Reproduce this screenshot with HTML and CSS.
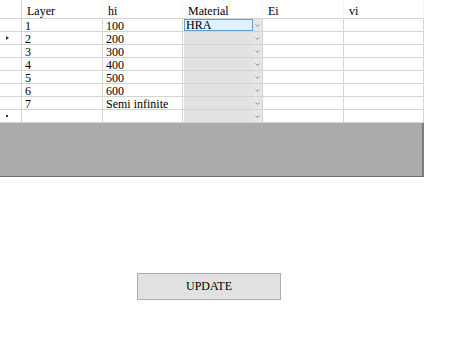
FILE: index.html
```html
<!DOCTYPE html>
<html>
<head>
<meta charset="utf-8">
<link rel="stylesheet" href="styles.css">
</head>
<body>
<div class="grid">
  <div class="row head">
    <div class="c rh"></div>
    <div class="c">Layer</div>
    <div class="c">hi</div>
    <div class="c">Material</div>
    <div class="c">Ei</div>
    <div class="c">vi</div>
  </div>
  <div class="row">
    <div class="c rh"></div>
    <div class="c">1</div>
    <div class="c">100</div>
    <div class="c cb"><div class="sel">HRA</div><div class="arr"><svg width="5" height="3" viewBox="0 0 5 3"><path d="M0.5 0.5 L2.5 2.5 L4.5 0.5" fill="none" stroke="#8a8a8a" stroke-width="1"/></svg></div></div>
    <div class="c"></div>
    <div class="c"></div>
  </div>
  <div class="row">
    <div class="c rh"><span class="tri"></span></div>
    <div class="c">2</div>
    <div class="c">200</div>
    <div class="c cb"><div class="box"></div><div class="arr"><svg width="5" height="3" viewBox="0 0 5 3"><path d="M0.5 0.5 L2.5 2.5 L4.5 0.5" fill="none" stroke="#8a8a8a" stroke-width="1"/></svg></div></div>
    <div class="c"></div>
    <div class="c"></div>
  </div>
  <div class="row">
    <div class="c rh"></div>
    <div class="c">3</div>
    <div class="c">300</div>
    <div class="c cb"><div class="box"></div><div class="arr"><svg width="5" height="3" viewBox="0 0 5 3"><path d="M0.5 0.5 L2.5 2.5 L4.5 0.5" fill="none" stroke="#8a8a8a" stroke-width="1"/></svg></div></div>
    <div class="c"></div>
    <div class="c"></div>
  </div>
  <div class="row">
    <div class="c rh"></div>
    <div class="c">4</div>
    <div class="c">400</div>
    <div class="c cb"><div class="box"></div><div class="arr"><svg width="5" height="3" viewBox="0 0 5 3"><path d="M0.5 0.5 L2.5 2.5 L4.5 0.5" fill="none" stroke="#8a8a8a" stroke-width="1"/></svg></div></div>
    <div class="c"></div>
    <div class="c"></div>
  </div>
  <div class="row">
    <div class="c rh"></div>
    <div class="c">5</div>
    <div class="c">500</div>
    <div class="c cb"><div class="box"></div><div class="arr"><svg width="5" height="3" viewBox="0 0 5 3"><path d="M0.5 0.5 L2.5 2.5 L4.5 0.5" fill="none" stroke="#8a8a8a" stroke-width="1"/></svg></div></div>
    <div class="c"></div>
    <div class="c"></div>
  </div>
  <div class="row">
    <div class="c rh"></div>
    <div class="c">6</div>
    <div class="c">600</div>
    <div class="c cb"><div class="box"></div><div class="arr"><svg width="5" height="3" viewBox="0 0 5 3"><path d="M0.5 0.5 L2.5 2.5 L4.5 0.5" fill="none" stroke="#8a8a8a" stroke-width="1"/></svg></div></div>
    <div class="c"></div>
    <div class="c"></div>
  </div>
  <div class="row">
    <div class="c rh"></div>
    <div class="c">7</div>
    <div class="c">Semi infinite</div>
    <div class="c cb"><div class="box"></div><div class="arr"><svg width="5" height="3" viewBox="0 0 5 3"><path d="M0.5 0.5 L2.5 2.5 L4.5 0.5" fill="none" stroke="#8a8a8a" stroke-width="1"/></svg></div></div>
    <div class="c"></div>
    <div class="c"></div>
  </div>
  <div class="row">
    <div class="c rh"><span class="star"></span></div>
    <div class="c"></div>
    <div class="c"></div>
    <div class="c cb"><div class="box"></div><div class="arr"><svg width="5" height="3" viewBox="0 0 5 3"><path d="M0.5 0.5 L2.5 2.5 L4.5 0.5" fill="none" stroke="#8a8a8a" stroke-width="1"/></svg></div></div>
    <div class="c"></div>
    <div class="c"></div>
  </div>
</div>
<div class="actions">
  <button class="btn">UPDATE</button>
</div>
</body>
</html>
```
FILE: styles.css
```css
html, body {
  margin: 0;
  padding: 0;
  background: #ffffff;
}
body {
  font-family: "Liberation Serif", "Times New Roman", serif;
  font-size: 12px;
  color: #000;
}
.grid {
  width: 424px;
  height: 177px;
  background: #ababab;
  border-right: 2px solid #7b7b7b;
  border-bottom: 1px solid #6e6e6e;
  box-sizing: border-box;
}
.row {
  display: grid;
  grid-template-columns: 22px 81px 80px 80px 81px 80px;
  height: 13px;
}
.row.head {
  height: 19px;
}
.c {
  background: #fff;
  border-right: 1px solid #d4d4d4;
  border-bottom: 1px solid #d4d4d4;
  box-sizing: border-box;
  padding-left: 3px;
  padding-top: 1px;
  line-height: 12px;
  white-space: nowrap;
  overflow: hidden;
  position: relative;
}
.row.head .c {
  border-right-color: #f4f4f4;
  padding-left: 5px;
  padding-top: 2px;
  line-height: 18px;
}
.row.head .c.rh {
  border-right-color: #d4d4d4;
}
.rh {
  padding-left: 0;
}
.tri {
  position: absolute;
  left: 6px;
  top: 4px;
  width: 0;
  height: 0;
  border-top: 2px solid transparent;
  border-bottom: 2px solid transparent;
  border-left: 3px solid #333;
}
.star {
  position: absolute;
  left: 6px;
  top: 5px;
  width: 2px;
  height: 2px;
  background: #333;
}
.cb {
  display: flex;
  padding: 0 0 0 1px;
}
.cb .box, .cb .sel {
  flex: 1;
  background: #e2e2e2;
  height: 12px;
}
.cb .sel {
  background: #e3f1fc;
  border: 1px solid #5e9ed6;
  box-sizing: border-box;
  line-height: 10px;
  padding-left: 1px;
  font-size: 12px;
}
.cb .arr {
  width: 9px;
  height: 12px;
  background: #e6e6e6;
  display: flex;
  align-items: center;
  justify-content: center;
  padding-top: 1px;
  box-sizing: border-box;
}
.cb .arr svg {
  display: block;
}
.actions {
  padding: 96px 0 0 137px;
}
.btn {
  width: 144px;
  height: 27px;
  background: #e1e1e1;
  border: 1px solid #adadad;
  font-family: "Liberation Serif", "Times New Roman", serif;
  font-size: 12px;
  color: #000;
  padding: 0;
  margin: 0;
  display: block;
}
```
